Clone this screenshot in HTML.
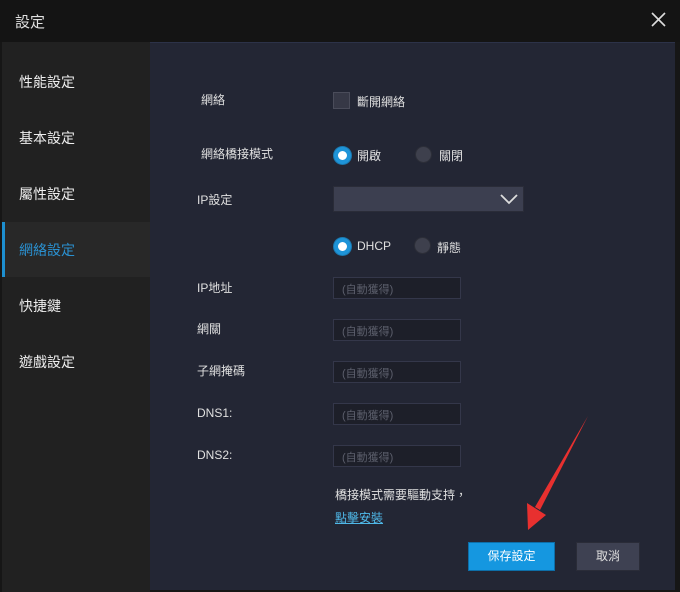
<!DOCTYPE html>
<html><head><meta charset="utf-8"><style>
*{margin:0;padding:0;box-sizing:border-box}
body{width:680px;height:592px;background:#161616;position:relative;overflow:hidden;font-family:"Liberation Sans","Noto Sans CJK TC",sans-serif;color:#d8d8d8}
.a{position:absolute}
.title{left:0;top:0;width:680px;height:42px;background:#141414}
.title span{position:absolute;left:15px;top:11px;font-size:15px;color:#e0e0e0}
.side{left:2px;top:42px;width:148px;height:550px;background:#212121}
.si{position:absolute;left:19px;font-size:14px;color:#eee}
.act{left:2px;top:222px;width:148px;height:55px;background:#282828}
.bar{left:2px;top:222px;width:3px;height:55px;background:#1d8fd0}
.panel{left:150px;top:42px;width:525px;height:548px;background:#232634;border-top:1px solid #2c3248}
.lb{position:absolute;font-size:12px;color:#e0e0e0}
.inp{position:absolute;left:333px;width:128px;height:22px;background:#1d1f29;border:1px solid #34374a;font-size:11px;color:#5c5f6c;padding:3px 0 0 8px}
.rad{position:absolute;width:17px;height:17px;border-radius:50%}
.on{background:#fff;border:4px solid #1e94d8;box-shadow:0 0 0 1px #1b79b0}
.off{background:#3e404d;border:1px solid #2c2e38}
</style></head><body>
<div class="a title"><span>設定</span>
<svg class="a" style="left:651px;top:12px" width="15" height="15" viewBox="0 0 15 15"><path d="M1 1L14 14M14 1L1 14" stroke="#ddd" stroke-width="1.6"/></svg></div>
<div class="a side"></div>
<div class="a act"></div><div class="a bar"></div>
<div class="si" style="top:72px">性能設定</div>
<div class="si" style="top:128px">基本設定</div>
<div class="si" style="top:184px">屬性設定</div>
<div class="si" style="top:240px;color:#2a90d0">網絡設定</div>
<div class="si" style="top:296px">快捷鍵</div>
<div class="si" style="top:352px">遊戲設定</div>
<div class="a panel"></div>
<div class="lb" style="left:201px;top:91px">網絡</div>
<div class="a" style="left:333px;top:92px;width:17px;height:17px;background:#363846;border:1px solid #4a4c5a"></div>
<div class="lb" style="left:357px;top:93px">斷開網絡</div>
<div class="lb" style="left:201px;top:145px">網絡橋接模式</div>
<div class="rad on" style="left:334px;top:147px"></div>
<div class="lb" style="left:357px;top:147px">開啟</div>
<div class="rad off" style="left:415px;top:146px"></div>
<div class="lb" style="left:439px;top:147px">關閉</div>
<div class="lb" style="left:197px;top:191px">IP設定</div>
<div class="a" style="left:333px;top:186px;width:191px;height:26px;background:#3c3f50;border:1px solid #2a2c38"></div>
<svg class="a" style="left:500px;top:194px" width="18" height="11" viewBox="0 0 18 11"><path d="M1 1L9 9L17 1" stroke="#ddd" stroke-width="1.8" fill="none"/></svg>
<div class="rad on" style="left:334px;top:238px"></div>
<div class="lb" style="left:357px;top:239px">DHCP</div>
<div class="rad off" style="left:414px;top:237px"></div>
<div class="lb" style="left:437px;top:239px">靜態</div>
<div class="lb" style="left:197px;top:279px">IP地址</div><div class="inp" style="top:277px">(自動獲得)</div>
<div class="lb" style="left:197px;top:320px">網關</div><div class="inp" style="top:319px">(自動獲得)</div>
<div class="lb" style="left:197px;top:362px">子網掩碼</div><div class="inp" style="top:361px">(自動獲得)</div>
<div class="lb" style="left:197px;top:406px">DNS1:</div><div class="inp" style="top:403px">(自動獲得)</div>
<div class="lb" style="left:197px;top:448px">DNS2:</div><div class="inp" style="top:445px">(自動獲得)</div>
<div class="lb" style="left:335px;top:486px">橋接模式需要驅動支持，</div>
<div class="lb" style="left:335px;top:509px;color:#4fb8e8;text-decoration:underline">點擊安裝</div>
<div class="a" style="left:468px;top:542px;width:87px;height:29px;background:#1597e0;border:1px solid #0d6ea8;color:#fff;font-size:12px;text-align:center;line-height:27px">保存設定</div>
<div class="a" style="left:576px;top:542px;width:64px;height:29px;background:#3e4152;border:1px solid #2a2c38;color:#e0e0e0;font-size:12px;text-align:center;line-height:27px">取消</div>
<svg class="a" style="left:0;top:0" width="680" height="592"><path d="M588 416L540 510L535 507Z" fill="#e8302f"/><path d="M528 530L527 503L546 515Z" fill="#e8302f"/></svg>
</body></html>
